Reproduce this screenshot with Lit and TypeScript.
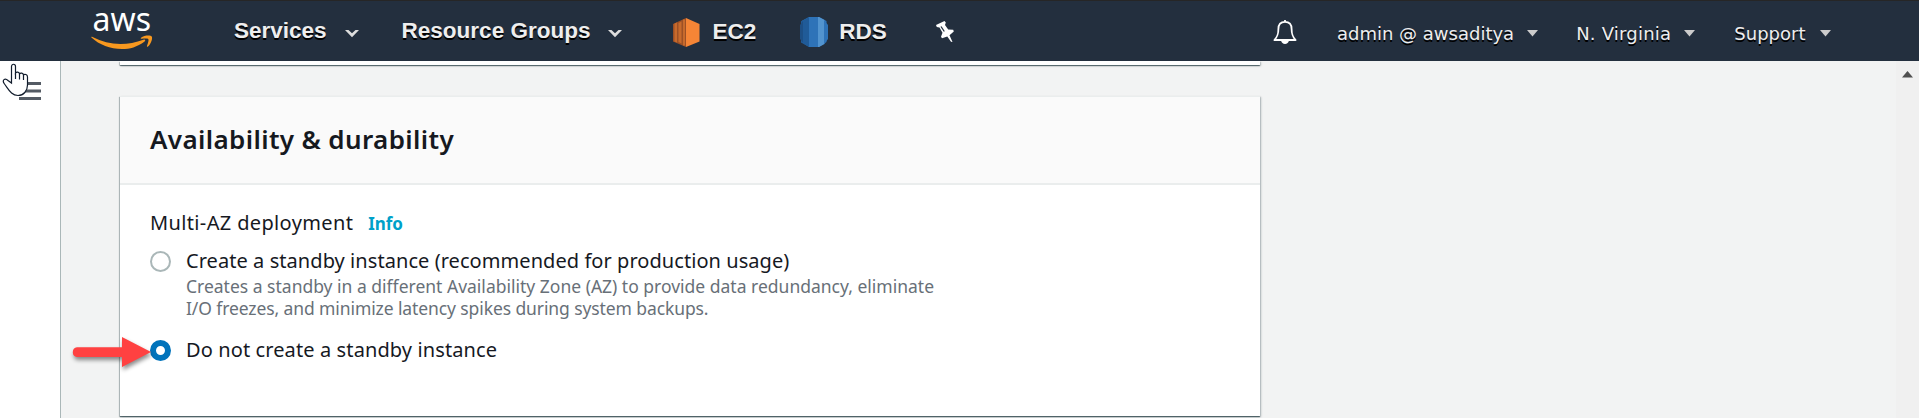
import { LitElement, html, css, svg } from "lit";
import { customElement, property } from "lit/decorators.js";

@customElement("nav-menu")
export class NavMenu extends LitElement {
  @property() label = "";
  @property() kind: "major" | "minor" = "major";
  static styles = css`
    :host { display: flex; align-items: center; color: #eee; white-space: nowrap; text-shadow: 0 2px 0 #000; }
    .major { font: bold 22.5px/30px "Liberation Sans", Arial, sans-serif; }
    .minor { font: 18px/30px "DejaVu Sans", Verdana, sans-serif; }
    svg { display: block; flex: none; }
    .chevron { margin: 6px 0 0 18px; }
    .caret { margin: 0 0 2px var(--caret-gap, 13px); }
  `;
  render() {
    return html`
      <span class=${this.kind}>${this.label}</span>
      ${this.kind === "major"
        ? html`<svg class="chevron" width="14" height="8" viewBox="0 0 14 8"><path d="M0 0h3.5L7 3.2 10.500 0H14L7 7.200z" fill="#ddd"/></svg>`
        : html`<svg class="caret" width="11" height="7" viewBox="0 0 11 7"><path d="M0 0h11L5.500 6.500z" fill="#ccc"/></svg>`}
    `;
  }
}

@customElement("radio-option")
export class RadioOption extends LitElement {
  @property({ type: Boolean }) checked = false;
  static styles = css`
    :host { display: flex; align-items: flex-start; gap: 15px; }
    .dot { box-sizing: border-box; flex: none; width: 21px; height: 21px; margin-top: 4px; border: 2px solid #aab7b8; border-radius: 50%; background: #fff; }
    .dot.checked { border: 6px solid #0073bb; }
  `;
  render() {
    return html`<div class="dot ${this.checked ? "checked" : ""}"></div><div><slot></slot></div>`;
  }
}

const awsLogo = svg`
  <text x="1.500" y="31" font-family="Noto Sans" font-size="32" font-weight="400" textLength="58.500" fill="#fff">aws</text>
  <path d="M.4 37.600C0 36.800.7 36.500 1.500 37c16 8.500 34 9 51 2.700 1.500-.6 2.400.7 1.100 1.700C46 47 39 49 31 49 19 49 8.500 45 .4 37.600z" fill="#f7981f"/>
  <path d="M50 37.700c3-2.400 9.500-2.600 10.700-1.300 1.200 1.500-.5 7.400-3.700 10.100-.8.7-1.300.2-1-.7 1-2.300 2-5.700 1.300-6.700-.8-1-4.300-.6-6.600-.3-.9.100-1.300-.5-.7-1.100z" fill="#f7981f"/>`;

@customElement("app-root")
export class AppRoot extends LitElement {
  static styles = css`
    :host { display: block; position: relative; height: 418px; overflow: hidden; background: #f2f3f3; font-family: "Noto Sans", "Open Sans", sans-serif; color: #16191f; }
    svg { display: block; flex: none; }
    header { box-sizing: border-box; display: flex; height: 61px; padding-left: 91px; border-top: 1px solid #262626; background: #232f3e; }
    .logo { margin-top: -1px; overflow: visible; }
    .services { margin: 15px 0 0 81px; height: 30px; }
    .groups { margin: 15px 0 0 43px; height: 30px; }
    .shortcut { display: flex; align-items: center; height: 30px; margin-top: 16px; font: bold 22.5px/30px "Liberation Sans", Arial, sans-serif; color: #eee; text-shadow: 0 2px 0 #000; }
    .ec2 { margin-left: 51px; gap: 12px; }
    .rds { margin-left: 44px; gap: 11px; }
    .pin { margin: 20px 0 0 49px; }
    .account { display: flex; margin: 18px 88px 0 auto; height: 30px; }
    .bell { margin: 0 40px 0 0; }
    .region { margin-left: 38px; letter-spacing: .22px; }
    .support { margin-left: 39px; --caret-gap: 14.5px; }
    .page { display: flex; height: 357px; }
    .side { box-sizing: border-box; width: 61px; border-right: 1px solid #aab7b8; background: #fff; padding: 21px 0 0 19px; }
    .main { flex: 1; padding-left: 59px; }
    .card { width: 1140px; background: #fff; box-shadow: 0 1px 1px 0 rgba(0,28,36,.5), 1px 1px 2px 0 rgba(0,28,36,.25), -1px 1px 1px 0 rgba(0,28,36,.2); }
    .previous { height: 4px; margin-bottom: 31px; }
    .current { box-sizing: border-box; height: 320px; border-top: 1px solid #eaeded; }
    .title { box-sizing: border-box; height: 88px; padding-left: 30px; background: #fafafa; border-bottom: 2px solid #eaeded; font-size: 26px; line-height: 85px; font-weight: 600; letter-spacing: .37px; margin: 0; }
    .fields { padding: 23px 30px 0; }
    .question { display: flex; align-items: baseline; gap: 15px; font-size: 20px; line-height: 30px; letter-spacing: .36px; }
    .info { color: #00a1c9; font-size: 17px; font-weight: 700; letter-spacing: -.1px; }
    .first { margin-top: 8px; }
    .second { margin-top: 17px; }
    .name { font-size: 20px; line-height: 28px; letter-spacing: .06px; }
    .second .name { letter-spacing: .11px; }
    .desc { font-size: 17.500px; line-height: 22px; color: #687078; white-space: nowrap; }
    .tight { letter-spacing: -.1px; }
    .scroll { width: 23px; background: #f0f0f0; }
    .scroll svg { margin: 10px 0 0 6px; }
    .arrow { position: absolute; left: 65px; top: 332px; filter: drop-shadow(1px 3px 2px rgba(0,0,0,.45)); }
    .cursor { position: absolute; left: 2px; top: 63px; }
  `;
  render() {
    return html`
      <header>
        <svg class="logo" width="62" height="52" viewBox="0 0 62 52">${awsLogo}</svg>
        <nav-menu class="services" label="Services"></nav-menu>
        <nav-menu class="groups" label="Resource Groups"></nav-menu>
        <div class="shortcut ec2">
          <svg width="27" height="29" viewBox="0 0 27 29">
            <path d="M0 6l13-6v29L0 23.500z" fill="#9d5025"/>
            <path d="M1.500 5.500L4 4.500v20l-2.500-1zM5.500 5l3-1.500v22l-3-1.500zM10 1.500h2v26h-2z" fill="#c76a2c"/>
            <path d="M13 0l13.500 6v17.500L13 29z" fill="#f58536"/>
          </svg>
          <span>EC2</span>
        </div>
        <div class="shortcut rds">
          <svg width="28" height="30" viewBox="0 0 28 30">
            <path d="M9 0h10l7.500 4v21L19 30H9L1.500 25V4z" fill="#2e73b8"/>
            <path d="M9 0v30L1 25.500V4.500z" fill="#205b98"/>
            <path d="M0 8l3-4v21.500L0 22z" fill="#1d4f85"/>
            <path d="M18 0h1l5.500 3v24L19 30h-1z" fill="#5294cf"/>
            <path d="M24 3l4 5v14l-4 5z" fill="#2e73b8"/>
          </svg>
          <span>RDS</span>
        </div>
        <svg class="pin" width="19" height="22" viewBox="0 0 19 22">
          <path d="M0 4L8.500 0l1.300 1.500-.8 2.500 3.200 4.500 5 .3.600 1.700-4.300 3.800 3 6.700-1.500-.3-3.700-5.200-5.300 1.800-1-1.600 1.500-3.900L3.500 6.500.8 6z" fill="#fff"/>
          <path d="M5 5.500l3.300 5" stroke="#232f3e" stroke-width="1.300"/>
        </svg>
        <div class="account">
          <svg class="bell" width="24" height="26" viewBox="0 0 24 26">
            <path d="M12 1v2M12 2.800c-4.500 0-6.600 3-6.600 7.200 0 6-1.300 8-4 11h21.200c-2.700-3-4-5-4-11 0-4.200-2.100-7.200-6.600-7.200z" fill="none" stroke="#fff" stroke-width="1.800" stroke-linejoin="round"/>
            <path d="M8 21.500h8c-.5 2.300-2 3.500-4 3.500s-3.500-1.200-4-3.500z" fill="#fff"/>
          </svg>
          <nav-menu kind="minor" label="admin @ awsaditya"></nav-menu>
          <nav-menu class="region" kind="minor" label="N. Virginia"></nav-menu>
          <nav-menu class="support" kind="minor" label="Support"></nav-menu>
        </div>
      </header>
      <div class="page">
        <div class="side">
          <svg width="22" height="18" viewBox="0 0 22 18"><path d="M0 1.500h22M0 9h22M0 16.500h22" stroke="#545b64" stroke-width="3"/></svg>
        </div>
        <div class="main">
          <div class="card previous"></div>
          <section class="card current">
            <h2 class="title">Availability &amp; durability</h2>
            <div class="fields">
              <div class="question">Multi-AZ deployment <span class="info">Info</span></div>
              <radio-option class="first">
                <div class="name">Create a standby instance (recommended for production usage)</div>
                <div class="desc">Creates a standby in a different Availability Zone (AZ) to provide data redundancy, eliminate<br /><span class="tight">I/O freezes, and minimize latency spikes during system backups.</span></div>
              </radio-option>
              <radio-option class="second" checked>
                <div class="name">Do not create a standby instance</div>
              </radio-option>
            </div>
          </section>
        </div>
        <div class="scroll"><svg width="11" height="7" viewBox="0 0 11 7"><path d="M0 6.500L5.500 0 11 6.500z" fill="#505050"/></svg></div>
      </div>
      <svg class="arrow" width="86" height="40" viewBox="0 0 86 40">
        <path d="M12 15.300h45V5l29 15-29 15V25H12a4.900 4.900 0 0 1 0-9.700z" fill="#ff4141"/>
      </svg>
      <svg class="cursor" width="28" height="34" viewBox="0 0 28 34">
        <path d="M9.500 20V3.500c0-3 4-3 4 0V10c1-1.500 3.800-1.200 4 .8 1-1.200 3.700-.9 4 1.100 1.200-1 4-.6 4 2V22c0 6-4 10.500-9.500 10.500C9.500 32.500 7 27 2.500 21c-3-4 .5-6.500 3.500-3.500z" fill="#fff" stroke="#111c2c" stroke-width="1.200"/>
        <path d="M13.500 10v6M17.500 11v5.500M21.500 12v5" stroke="#111c2c" stroke-width="1.200"/>
      </svg>
    `;
  }
}
